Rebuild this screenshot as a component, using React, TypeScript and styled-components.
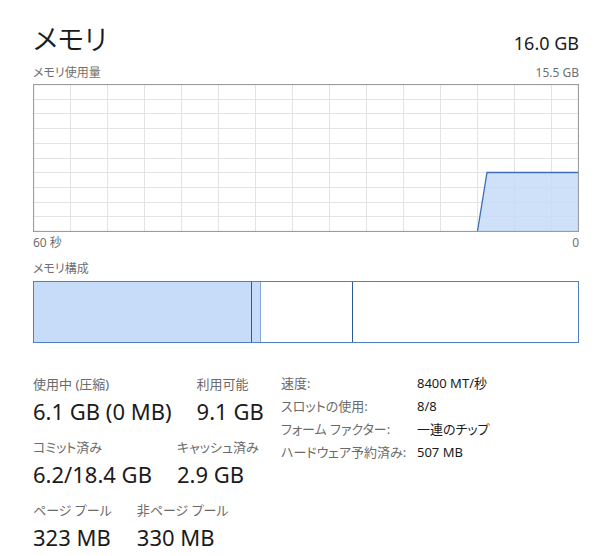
import React from "react";
import styled, { createGlobalStyle } from "styled-components";

const Global = createGlobalStyle`
  html, body { margin: 0; padding: 0; background: #ffffff; }
  body {
    font-family: "Noto Sans", "Noto Sans CJK JP", sans-serif;
    font-feature-settings: "palt";
    color: #1b1b1b;
  }
`;

const Page = styled.div`
  width: 546px;
  padding: 20px 0 0 33px;
`;

const Header = styled.div`
  display: flex;
  justify-content: space-between;
  align-items: baseline;
  height: 36px;
`;

const Title = styled.h1`
  margin: 0;
  font-family: "Noto Sans CJK JP", sans-serif;
  font-size: 28px;
  font-weight: 350;
  line-height: 36px;
`;

const Total = styled.span`
  font-size: 18px;
  line-height: 36px;
`;

const CaptionRow = styled.div<{ $mt: number }>`
  display: flex;
  justify-content: space-between;
  margin-top: ${(p) => p.$mt}px;
  font-size: 12px;
  line-height: 16px;
  color: #707070;
`;

const ChartSvg = styled.svg`
  display: block;
  margin-top: 3px;
`;

const Bar = styled.div`
  display: flex;
  margin-top: 4px;
  height: 62px;
  box-sizing: border-box;
  border: 1px solid #4f80bf;
`;

const Segment = styled.div<{ $w?: number; $fill: boolean; $edge?: string }>`
  ${(p) => (p.$w !== undefined ? `width: ${p.$w}px;` : "flex: 1;")}
  flex-shrink: 0;
  background: ${(p) => (p.$fill ? "#c6dcf8" : "#ffffff")};
  ${(p) => (p.$edge ? `border-right: 1px solid ${p.$edge};` : "")}
`;

const Stats = styled.div`
  display: flex;
  align-items: flex-start;
  margin-top: 32px;
`;

const LeftStats = styled.div`
  width: 248px;
  display: flex;
  flex-direction: column;
  gap: 13px;
`;

const StatRow = styled.div`
  display: flex;
  gap: 25px;
`;

const Stat = styled.div`
  display: flex;
  flex-direction: column;
  gap: 4px;
`;

const StatLabel = styled.div`
  font-size: 13px;
  line-height: 18px;
  color: #6b6b6b;
  white-space: nowrap;
`;

const StatValue = styled.div`
  font-size: 22px;
  line-height: 28px;
  white-space: nowrap;
`;

const Details = styled.div`
  display: grid;
  grid-template-columns: 136px auto;
  grid-auto-rows: 23px;
  margin-top: -3px;
  font-size: 13px;
  line-height: 23px;
  white-space: nowrap;
`;

const DetailLabel = styled.div`
  color: #6b6b6b;
`;

const DetailValue = styled.div`
  color: #1b1b1b;
`;

const W = 546;
const H = 148;

function UsageChart() {
  const vLines = Array.from({ length: 14 }, (_, k) => 37.5 + 37 * k);
  const hLines = Array.from({ length: 9 }, (_, k) => Math.round(14.7 * (k + 1)) + 0.5);
  return (
    <ChartSvg width={W} height={H} viewBox={`0 0 ${W} ${H}`}>
      {vLines.map((x) => (
        <line key={"v" + x} x1={x} y1={0} x2={x} y2={H} stroke="#e3e3e3" strokeWidth={1} />
      ))}
      {hLines.map((y) => (
        <line key={"h" + y} x1={0} y1={y} x2={W} y2={y} stroke="#e3e3e3" strokeWidth={1} />
      ))}
      <polygon
        points={`444.5,147 454,88 546,88 546,147`}
        fill="#c6dcf8"
        fillOpacity={0.85}
      />
      <polyline
        points={`444.5,147 454,88.5 545,88.5`}
        fill="none"
        stroke="#3d6fb4"
        strokeWidth={1.3}
      />
      <rect x={0.5} y={0.5} width={W - 1} height={H - 1} fill="none" stroke="#9c9c9c" strokeWidth={1.2} />
    </ChartSvg>
  );
}

const stats = [
  [
    { label: "使用中 (圧縮)", value: "6.1 GB (0 MB)" },
    { label: "利用可能", value: "9.1 GB" },
  ],
  [
    { label: "コミット済み", value: "6.2/18.4 GB" },
    { label: "キャッシュ済み", value: "2.9 GB" },
  ],
  [
    { label: "ページ プール", value: "323 MB" },
    { label: "非ページ プール", value: "330 MB" },
  ],
];

const details = [
  { label: "速度:", value: "8400 MT/秒" },
  { label: "スロットの使用:", value: "8/8" },
  { label: "フォーム ファクター:", value: "一連のチップ" },
  { label: "ハードウェア予約済み:", value: "507 MB" },
];

export default function App() {
  return (
    <>
      <Global />
      <Page>
        <Header>
          <Title>メモリ</Title>
          <Total>16.0 GB</Total>
        </Header>
        <CaptionRow $mt={9}>
          <span>メモリ使用量</span>
          <span>15.5 GB</span>
        </CaptionRow>
        <UsageChart />
        <CaptionRow $mt={3}>
          <span>60 秒</span>
          <span>0</span>
        </CaptionRow>
        <CaptionRow $mt={10}>
          <span>メモリ構成</span>
        </CaptionRow>
        <Bar>
          <Segment $w={217} $fill $edge="#2c5a97" />
          <Segment $w={8} $fill $edge="#86a8d6" />
          <Segment $w={91} $fill={false} $edge="#2c5a97" />
          <Segment $fill={false} />
        </Bar>
        <Stats>
          <LeftStats>
            {stats.map((row, i) => (
              <StatRow key={i}>
                {row.map((s) => (
                  <Stat key={s.label}>
                    <StatLabel>{s.label}</StatLabel>
                    <StatValue>{s.value}</StatValue>
                  </Stat>
                ))}
              </StatRow>
            ))}
          </LeftStats>
          <Details>
            {details.map((d) => (
              <React.Fragment key={d.label}>
                <DetailLabel>{d.label}</DetailLabel>
                <DetailValue>{d.value}</DetailValue>
              </React.Fragment>
            ))}
          </Details>
        </Stats>
      </Page>
    </>
  );
}
